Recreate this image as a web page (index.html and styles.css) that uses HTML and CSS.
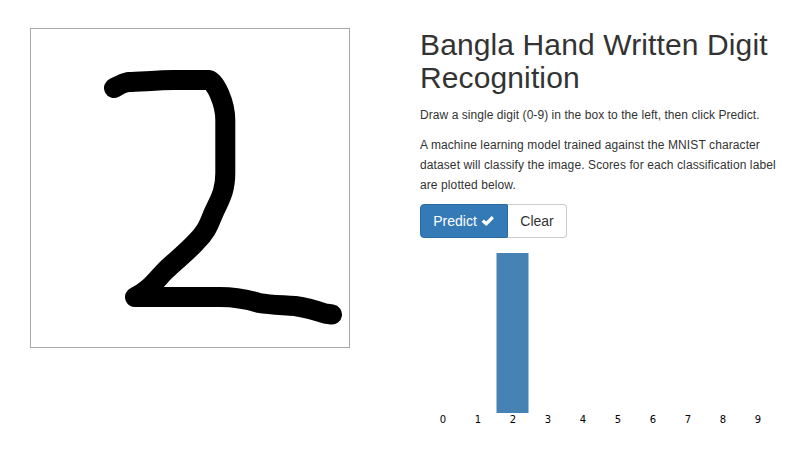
FILE: index.html
```html
<!DOCTYPE html>
<html lang="en">
<head>
<meta charset="utf-8">
<title>Bangla Hand Written Digit Recognition</title>
<link rel="stylesheet" href="styles.css">
</head>
<body>
<main class="layout">
  <svg class="pad" viewBox="0 0 318 318" role="img" aria-label="Drawing area">
    <path class="stroke" d="M83 59 C86 57.500 89 54.500 97 53 C109 52.800 126 51.200 143 51 H177.500 C184 51.500 194.300 74 194.300 91 V144 C194.300 162 189 170 183 183 C178 194 177 201 165 213 C155 224 144 232 134 242 C125 251 119 261 104 268 H189 C207 268 217 270.500 228 274 C240 276 251 276 264 277 C277 279 288 282.500 294 284.500 L301 285.500"/>
  </svg>
  <section class="panel">
    <h1>Bangla Hand Written Digit Recognition</h1>
    <p class="hint">Draw a single digit (0-9) in the box to the left, then click Predict.</p>
    <p class="about">A machine learning model trained against the MNIST character dataset will classify the image. Scores for each classification label are plotted below.</p>
    <div class="buttons">
      <button class="btn primary">Predict <svg class="check" viewBox="0 0 14 14"><path d="M0.600 7.700 2.900 5.400 5.200 7.500 10.700 1.900 13 4.200 6.200 11.300Q5.300 12.100 4.400 11.300Z"/></svg></button><button class="btn clear">Clear</button>
    </div>
    <svg class="chart" viewBox="0 0 360 180">
      <rect class="bar" x="76.500" y="0" width="32" height="160"/>
      <g class="labels">
        <text x="23" y="170">0</text><text x="58" y="170">1</text><text x="93" y="170">2</text><text x="128" y="170">3</text><text x="163" y="170">4</text><text x="198" y="170">5</text><text x="233" y="170">6</text><text x="268" y="170">7</text><text x="303" y="170">8</text><text x="338" y="170">9</text>
      </g>
    </svg>
  </section>
</main>
</body>
</html>
```
FILE: styles.css
```css
* { box-sizing: border-box; }
body {
  margin: 0;
  background: #fff;
  color: #333;
  font: 12px/20px "Liberation Sans", Arial, sans-serif;
}
.layout {
  display: flex;
  align-items: flex-start;
  gap: 70px;
  padding: 28px 0 0 30px;
}
.pad {
  flex: none;
  width: 320px;
  height: 320px;
  border: 1px solid #a9a9a9;
}
.stroke {
  fill: none;
  stroke: #000;
  stroke-width: 20;
  stroke-linecap: round;
  stroke-linejoin: round;
}
.panel { width: 360px; }
h1 {
  margin: 0 0 11px;
  font-size: 30px;
  font-weight: 400;
  line-height: 33px;
  letter-spacing: 0.12px;
}
p { margin: 0 0 10px; }
.hint { letter-spacing: 0.06px; }
.about { margin-bottom: 9px; letter-spacing: 0.1px; }
.buttons { display: flex; }
.btn {
  height: 34px;
  padding: 6px 12px;
  border: 1px solid #ccc;
  border-radius: 0 4px 4px 0;
  background: #fff;
  color: #333;
  font: 14px/20px "Liberation Sans", Arial, sans-serif;
  white-space: nowrap;
}
.btn.primary {
  width: 88px;
  border-color: #2e6da4;
  border-radius: 4px 0 0 4px;
  background: #337ab7;
  color: #fff;
}
.btn.clear {
  width: 60px;
  margin-left: -1px;
  border-left-color: transparent;
  background-clip: padding-box;
}
.check {
  width: 14px;
  height: 14px;
  vertical-align: -2px;
  fill: #fff;
}
.chart {
  display: block;
  width: 360px;
  height: 180px;
  margin-top: 15px;
}
.bar { fill: #4682b4; }
.labels {
  font: 10px "DejaVu Sans", sans-serif;
  fill: #000;
  text-anchor: middle;
}
```
